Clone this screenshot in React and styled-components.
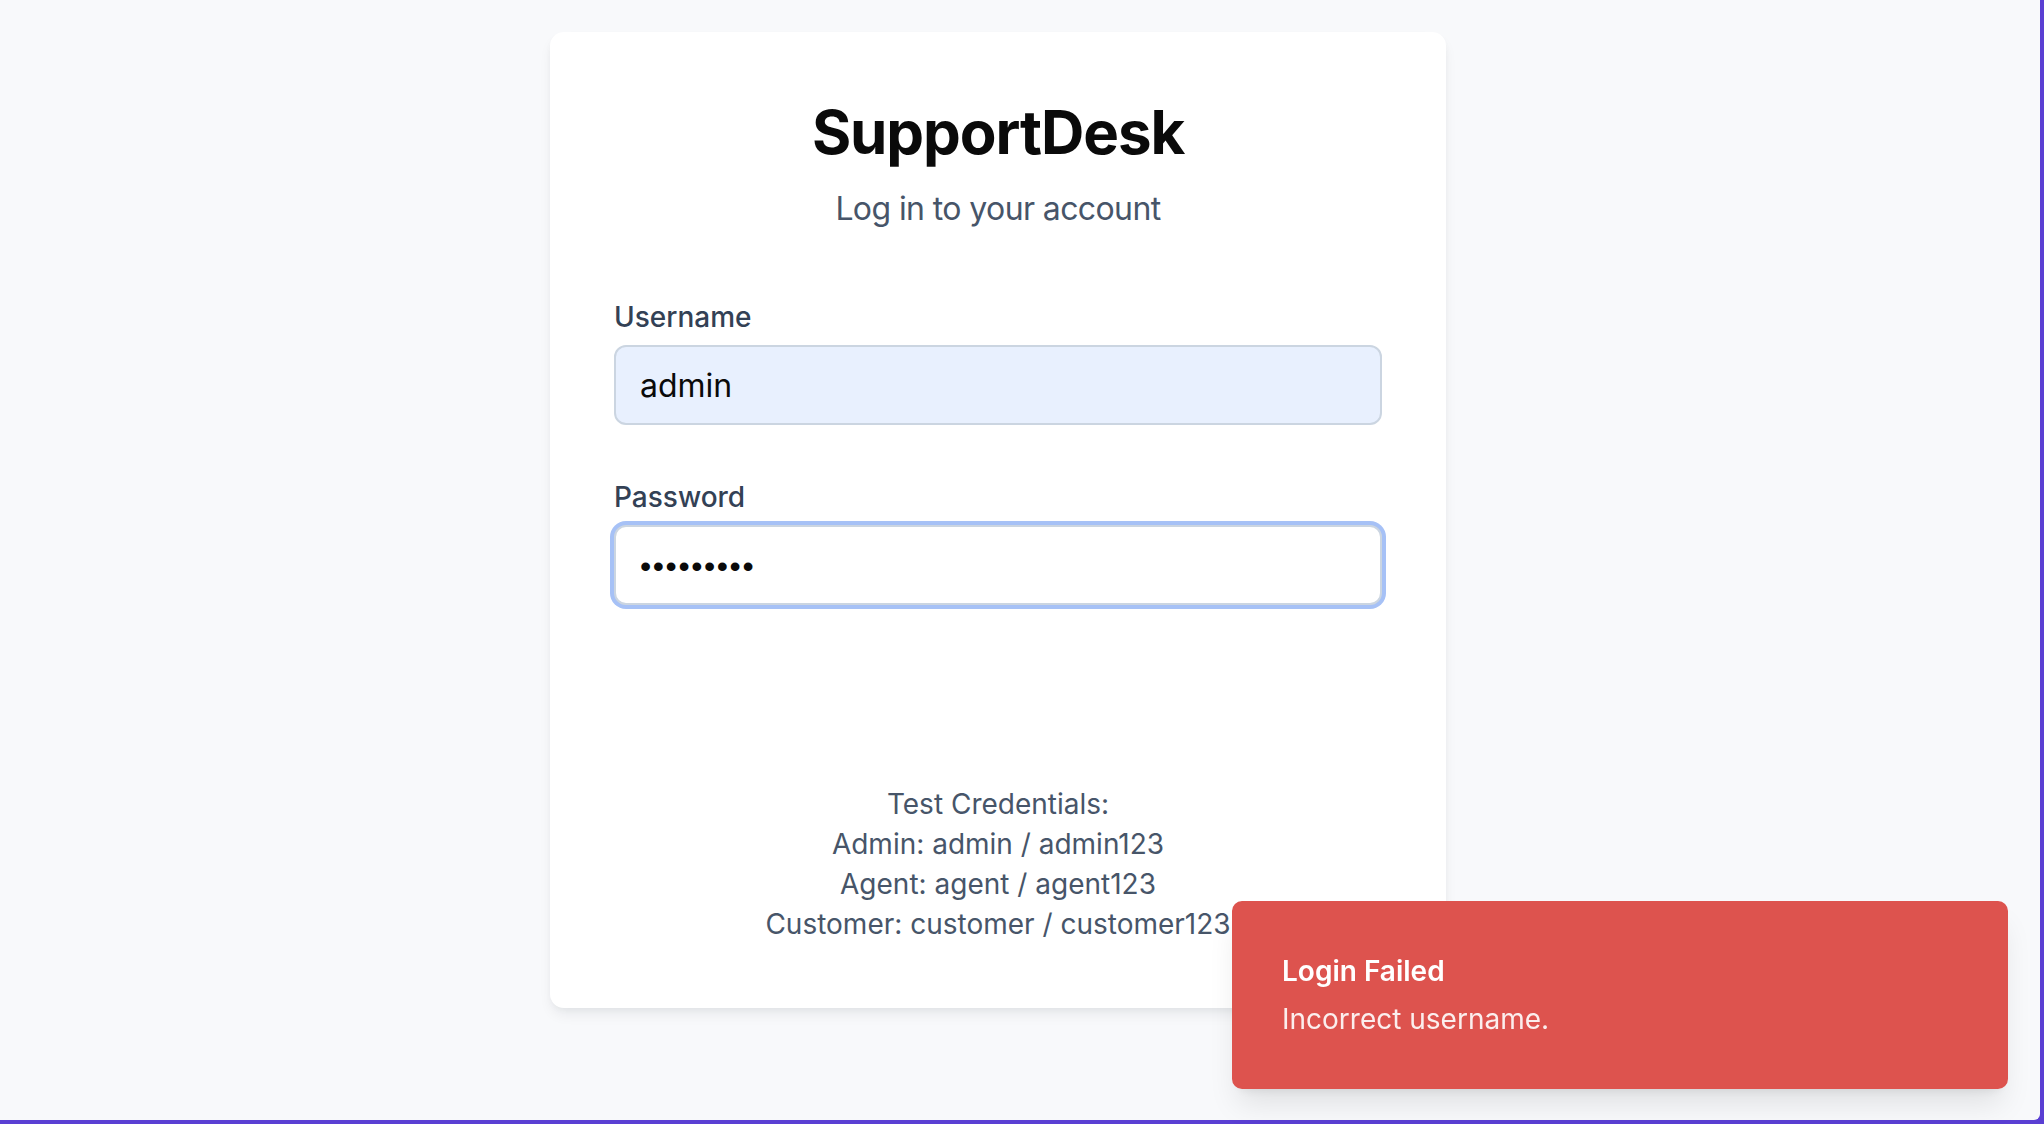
import styled, { createGlobalStyle } from 'styled-components';

const GlobalStyle = createGlobalStyle`
  html,
  body {
    margin: 0;
    padding: 0;
    background: #5a3fd3;
  }

  * {
    box-sizing: border-box;
  }

  body {
    font-family: Inter, 'Noto Sans', sans-serif;
    -webkit-font-smoothing: antialiased;
  }
`;

const credentials = [
  'Admin: admin / admin123',
  'Agent: agent / agent123',
  'Customer: customer / customer123',
];

const App = () => {
  return (
    <>
      <GlobalStyle />
      <Frame>
        <Card>
          <Header>
            <Title>SupportDesk</Title>
            <Subtitle>Log in to your account</Subtitle>
          </Header>

          <Field>
            <Label htmlFor="username">Username</Label>
            <Input id="username" type="text" defaultValue="admin" $autofill />
          </Field>

          <Field $spaced>
            <Label htmlFor="password">Password</Label>
            <Input
              id="password"
              type="password"
              defaultValue="admin1234"
              $focused
              $secret
            />
          </Field>

          <ButtonSlot />

          <Credentials>
            <div>Test Credentials:</div>
            {credentials.map(line => (
              <div key={line}>{line}</div>
            ))}
          </Credentials>
        </Card>

        <Toast role="alert">
          <ToastTitle>Login Failed</ToastTitle>
          <ToastText>Incorrect username.</ToastText>
        </Toast>
      </Frame>
    </>
  );
};

export default App;

const Frame = styled.div`
  width: 2044px;
  height: 1124px;
  display: flex;
  justify-content: center;
  align-items: flex-start;
  padding: 32px 44px 0 0;
  background-color: #f8f9fb;
  border-right: 4px solid #5a3fd3;
  border-bottom: 4px solid #5a3fd3;
  border-bottom-right-radius: 10px;
  overflow: hidden;
`;

const Card = styled.div`
  width: 896px;
  padding: 64px;
  background-color: #fff;
  border-radius: 14px;
  box-shadow: 0 8px 14px -2px rgba(15, 23, 42, 0.07),
    0 3px 8px -3px rgba(15, 23, 42, 0.06);
`;

const Header = styled.div`
  text-align: center;
  margin-bottom: 64px;
`;

const Title = styled.h1`
  margin: 0;
  font-size: 60px;
  line-height: 72px;
  font-weight: 700;
  letter-spacing: -1.1px;
  color: #0a0a0a;
`;

const Subtitle = styled.p`
  margin: 17px 0 0;
  font-size: 32px;
  line-height: 48px;
  letter-spacing: -0.6px;
  color: #475569;
`;

const Field = styled.div`
  display: flex;
  flex-direction: column;
  margin-top: ${p => (p.$spaced ? '52px' : '0')};
`;

const Label = styled.label`
  font-size: 28px;
  line-height: 40px;
  font-weight: 500;
  color: #334155;
  margin-bottom: 8px;
`;

const Input = styled.input`
  height: 80px;
  width: 100%;
  padding: ${p => (p.$secret ? '3px 24px 0' : '0 24px')};
  font-family: ${p => (p.$secret ? "'Liberation Sans', Arial, sans-serif" : 'inherit')};
  font-size: 32px;
  letter-spacing: ${p => (p.$secret ? '1.6px' : 'normal')};
  color: #0a0a0a;
  background-color: ${p => (p.$autofill ? '#e8f0fe' : '#fff')};
  border: 2px solid #cbd5e1;
  border-radius: 12px;
  outline: none;
  box-shadow: ${p => (p.$focused ? '0 0 0 4px #a6c1f6' : 'none')};
`;

const ButtonSlot = styled.div`
  height: 80px;
  margin: 48px 0 51px;
`;

const Credentials = styled.div`
  text-align: center;
  font-size: 28px;
  line-height: 40px;
  color: #475569;
`;

const Toast = styled.div`
  position: fixed;
  right: 36px;
  bottom: 35px;
  width: 776px;
  padding: 48px 64px 48px 48px;
  background-color: #dd534e;
  border: 2px solid #dd534e;
  border-radius: 10px;
  color: #fff;
  box-shadow: 0 20px 30px -6px rgba(0, 0, 0, 0.1),
    0 8px 12px -8px rgba(0, 0, 0, 0.1);
`;

const ToastTitle = styled.div`
  font-size: 28px;
  line-height: 40px;
  font-weight: 600;
`;

const ToastText = styled.div`
  margin-top: 8px;
  font-size: 28px;
  line-height: 40px;
  opacity: 0.9;
`;
